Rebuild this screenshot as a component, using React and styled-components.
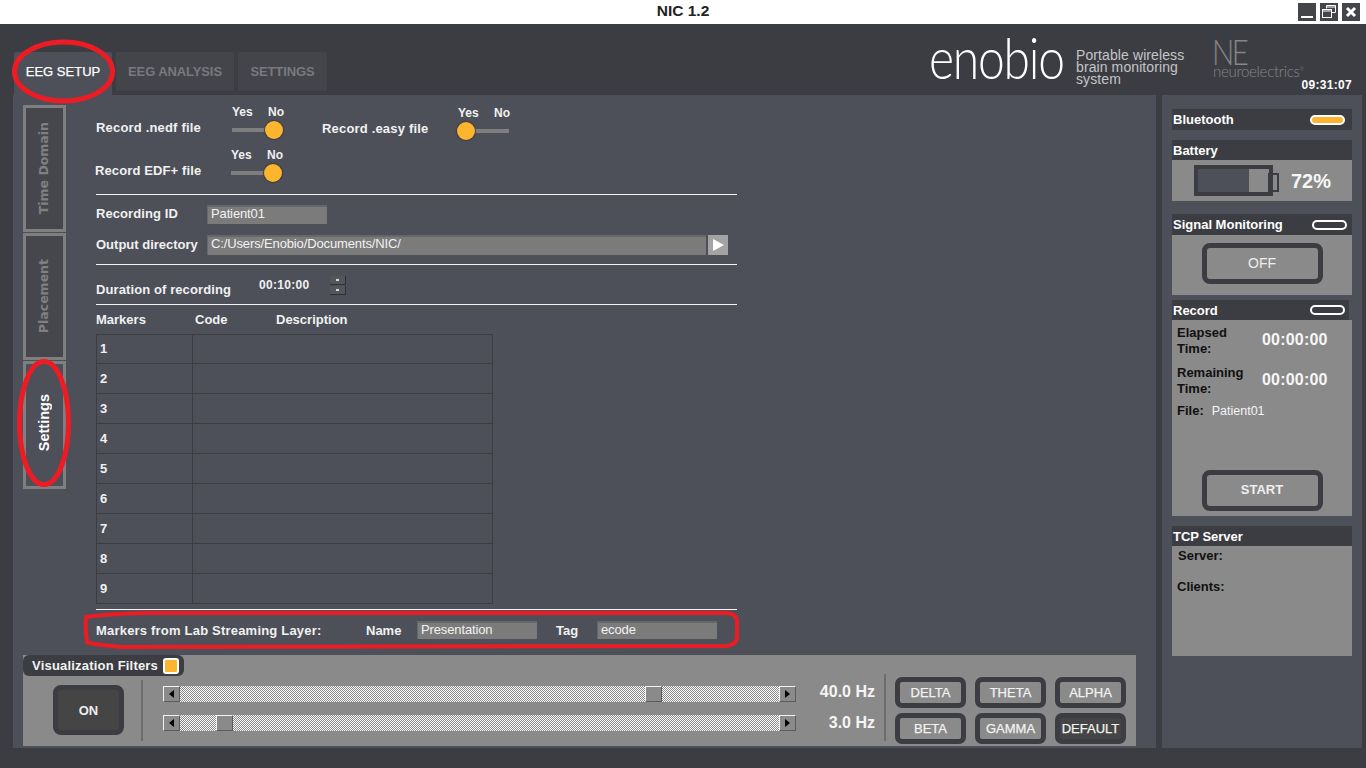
import React from 'react';
import styled, { createGlobalStyle } from 'styled-components';

const DARK = '#3c3d42';
const PANEL = '#4d5058';
const GREY = '#8a8a8a';
const ORANGE = '#fdb52f';

const Global = createGlobalStyle`
  html, body { margin: 0; padding: 0; background: ${DARK}; }
  body { font-family: "Liberation Sans", Arial, sans-serif; overflow: hidden; }
  * { box-sizing: border-box; }
`;

const Page = styled.div`
  position: relative;
  width: 1366px;
  height: 768px;
  display: flex;
  flex-flow: column;
  background: ${DARK};
  overflow: hidden;
`;

const TitleBar = styled.div`
  position: relative;
  height: 24px;
  flex: none;
  background: #fff;
  display: flex;
  align-items: center;
  justify-content: flex-end;
  padding-right: 6px;
  gap: 4px;
`;

const Title = styled.div`
  position: absolute;
  left: 0;
  right: 0;
  top: 3px;
  text-align: center;
  font-size: 15.5px;
  line-height: 16px;
  font-weight: 700;
  color: #222;
`;

const WinButton = styled.div`
  width: 18px;
  height: 18px;
  background: #44454a;
  display: flex;
  align-items: center;
  justify-content: center;
`;

const Header = styled.div`
  height: 71px;
  flex: none;
  display: flex;
  padding: 0 14px;
`;

const Tabs = styled.div`
  display: flex;
  gap: 4px;
  align-items: flex-start;
  padding-top: 28px;
`;

const Tab = styled.div`
  width: ${p => p.$width}px;
  height: ${p => (p.$active ? 43 : 39)}px;
  padding-top: 12px;
  text-align: center;
  font-size: 13px;
  line-height: 15px;
  font-weight: ${p => (p.$active ? 400 : 700)};
  letter-spacing: ${p => (p.$active ? 0 : -0.1)}px;
  -webkit-text-stroke: ${p => (p.$active ? 0.25 : 0)}px;
  background: ${p => (p.$active ? PANEL : '#44454b')};
  color: ${p => (p.$active ? '#fff' : '#77797e')};
  border-radius: 2px 2px 0 0;
`;

const Brand = styled.div`
  margin-left: auto;
  display: flex;
`;

const Enobio = styled.div`
  width: 147px;
  margin-top: 8px;
  margin-left: -2px;
  font-family: Lato, sans-serif;
  font-weight: 300;
  font-size: 48px;
  line-height: 56px;
  letter-spacing: -1.2px;
  color: #fff;
  transform: scaleY(1.2);
  transform-origin: 0 42px;
`;

const Tagline = styled.div`
  width: 137px;
  padding-top: 25px;
  font-size: 14px;
  line-height: 12px;
  letter-spacing: 0.1px;
  color: #c4c5c8;
`;

const Neuro = styled.div`
  width: 139px;
  display: flex;
  flex-flow: column;
  color: #85868a;
  font-family: Lato, sans-serif;
  font-weight: 300;
`;

const NeMark = styled.div`
  font-size: 36px;
  line-height: 26px;
  height: 27px;
  margin-top: 14px;
  margin-left: -1px;
  letter-spacing: -3px;
  transform: scaleX(0.82);
  transform-origin: 0 0;
`;

const NeName = styled.div`
  font-size: 15px;
  line-height: 13px;
  letter-spacing: -0.3px;
  sup {
    font-size: 5px;
    line-height: 0;
    vertical-align: 6px;
  }
`;

const Clock = styled.div`
  font-family: "Liberation Sans", sans-serif;
  font-weight: 700;
  text-align: right;
  font-size: 12px;
  line-height: 14px;
  letter-spacing: 0.3px;
  color: #fff;
`;

const Body = styled.div`
  height: 653px;
  flex: none;
  display: flex;
  padding-left: 13px;
`;

const Main = styled.div`
  width: 1143px;
  padding: 10px 0 2px 10px;
  display: flex;
  flex-flow: column;
  background: ${PANEL};
`;

const Top = styled.div`
  display: flex;
`;

const SideTabs = styled.div`
  width: 43px;
  display: flex;
  flex-flow: column;
  gap: 1px;
`;

const SideTab = styled.div`
  height: ${p => p.$height}px;
  display: flex;
  align-items: center;
  justify-content: center;
  padding-right: 2px;
  padding-bottom: ${p => (p.$active ? 5 : 0)}px;
  border: 3px solid #7f7f7f;
  background: ${p => (p.$active ? PANEL : '#46474c')};
  color: ${p => (p.$active ? '#fff' : '#808080')};
  span {
    writing-mode: vertical-rl;
    transform: rotate(180deg);
    font-family: ${p => (p.$active ? '"Liberation Sans"' : '"DejaVu Sans"')}, sans-serif;
    font-size: ${p => (p.$active ? 14.5 : 12.5)}px;
    font-weight: 700;
  }
`;

const Form = styled.div`
  width: 641px;
  margin-left: 30px;
  display: flex;
  flex-flow: column;
  color: #f1f1f1;
  font-size: 13px;
  line-height: 15px;
  font-weight: 700;
`;

const ToggleRow = styled.div`
  display: flex;
  align-items: flex-start;
  height: 34px;
  margin-top: ${p => p.$top || 0}px;
  margin-left: ${p => p.$left || 0}px;
`;

const ToggleGroup = styled.div`
  display: flex;
  align-items: flex-end;
  height: 34px;
  margin-left: ${p => p.$left || 0}px;
  margin-top: ${p => p.$top || 0}px;
`;

const FieldLabel = styled.div`
  width: ${p => p.$width}px;
  flex: none;
  margin-bottom: ${p => p.$bottom || 0}px;
  letter-spacing: ${p => p.$spacing || 0}px;
`;

const Toggle = styled.div`
  width: 52px;
`;

const ToggleText = styled.div`
  display: flex;
  justify-content: space-between;
  height: 16px;
  font-size: 12px;
  line-height: 14px;
`;

const Slider = styled.div`
  position: relative;
  height: 18px;
  &::before {
    content: '';
    position: absolute;
    left: 0;
    width: 51px;
    top: 7px;
    height: 4px;
    background: #7f7f7f;
  }
`;

const Knob = styled.div`
  position: absolute;
  top: 0;
  left: ${p => (p.$on ? -1 : 33)}px;
  width: 18px;
  height: 18px;
  border-radius: 50%;
  background: ${ORANGE};
  box-shadow: 0 0 1px 1px #3c3d42;
`;

const Rule = styled.div`
  height: 1px;
  flex: none;
  background: #f4f4f4;
  margin-top: ${p => p.$top}px;
`;

const Row = styled.div`
  display: flex;
  align-items: center;
  height: ${p => p.$height}px;
  margin-top: ${p => p.$top}px;
`;

const Input = styled.div`
  width: ${p => p.$width}px;
  height: 100%;
  padding-left: 3px;
  background: #7b7b7b;
  border-top: 2px solid #66676a;
  border-left: 1px solid #66676a;
  font-size: 13px;
  line-height: 14px;
  letter-spacing: -0.13px;
  font-weight: 400;
  color: #f2f2f2;
  white-space: nowrap;
`;

const PlayButton = styled.div`
  width: 20px;
  height: 20px;
  margin-left: 2px;
  background: #a3a3a3;
  display: flex;
  align-items: center;
  justify-content: center;
`;

const DurationRow = styled.div`
  display: flex;
  height: 19px;
  margin-top: 11px;
`;

const DurationLabel = styled.div`
  width: 163px;
  margin-top: 6px;
  letter-spacing: 0.1px;
`;

const DurationValue = styled.div`
  width: 71px;
  margin-top: 2px;
  font-size: 12px;
  letter-spacing: 0.3px;
`;

const Spinner = styled.div`
  width: 16px;
  height: 19px;
  display: flex;
  flex-flow: column;
  gap: 1px;
`;

const SpinButton = styled.div`
  flex: 1;
  background: #55565c;
  border-right: 1px solid #2f3034;
  border-bottom: 1px solid #2f3034;
  display: flex;
  align-items: center;
  justify-content: center;
  &::after {
    content: '';
    width: 3px;
    height: 2px;
    background: #d8d8d8;
  }
`;

const MarkerHead = styled.div`
  display: flex;
  height: 15px;
  margin-top: 7px;
`;

const MarkerCol = styled.div`
  width: ${p => p.$width}px;
`;

const Table = styled.table`
  width: 397px;
  height: 270px;
  margin-top: 7px;
  flex: none;
  border-collapse: collapse;
  td {
    height: 30px;
    padding: 0 0 0 3px;
    border: 1px solid #3c3d42;
  }
  tr:first-child td {
    height: 29px;
    padding-bottom: 1px;
  }
  td:first-child {
    width: 96px;
  }
`;

const LslLabel = styled.div`
  width: ${p => p.$width}px;
  flex: none;
  margin-left: ${p => p.$left || 0}px;
  letter-spacing: ${p => p.$spacing || 0}px;
`;

const Filters = styled.div`
  margin-top: auto;
  width: 1113px;
  height: 91px;
  flex: none;
  background: ${GREY};
`;

const FilterTab = styled.div`
  width: 161px;
  height: 21px;
  background: ${DARK};
  border-radius: 6px;
  display: flex;
  align-items: center;
  justify-content: space-between;
  padding: 0 5px 0 9px;
  color: #f2f2f2;
  font-size: 13px;
  font-weight: 700;
  letter-spacing: 0.2px;
`;

const Check = styled.div`
  width: 16px;
  height: 16px;
  border: 2px solid #fff;
  border-radius: 3px;
  background: ${ORANGE};
`;

const FilterRow = styled.div`
  display: flex;
  height: 70px;
  padding-left: 30px;
`;

const OnButton = styled.div`
  width: 71px;
  height: 50px;
  margin-top: 9px;
  border: 5px solid ${DARK};
  border-radius: 8px;
  background: #454545;
  color: #eee;
  font-size: 13px;
  font-weight: 700;
  display: flex;
  align-items: center;
  justify-content: center;
`;

const Divider = styled.div`
  width: 2px;
  flex: none;
  height: ${p => p.$height}px;
  margin-top: ${p => p.$top}px;
  margin-left: ${p => p.$left}px;
  background: #6d6d6d;
`;

const Scrolls = styled.div`
  width: 633px;
  margin: 10px 0 0 20px;
  display: flex;
  flex-flow: column;
  gap: 13px;
`;

const Scroll = styled.div`
  display: flex;
  height: 16px;
`;

const ScrollTrack = styled.div`
  position: relative;
  flex: 1;
  background: repeating-conic-gradient(#fff 0 25%, #8a8a8a 0 50%) 0 0 / 2px 2px;
`;

const ScrollButton = styled.div`
  width: 17px;
  height: 16px;
  flex: none;
  background: ${GREY};
  border: 1px solid;
  border-color: #f2f2f2 #5b5b5b #5b5b5b #f2f2f2;
  display: flex;
  align-items: center;
  justify-content: center;
`;

const Thumb = styled(ScrollButton)`
  position: absolute;
  top: 0;
  left: ${p => p.$left}px;
`;

const Arrow = styled.div`
  width: 0;
  height: 0;
  border-top: 4px solid transparent;
  border-bottom: 4px solid transparent;
  border-right: ${p => (p.$right ? '0' : '5px solid #000')};
  border-left: ${p => (p.$right ? '5px solid #000' : '0')};
`;

const HzColumn = styled.div`
  width: 79px;
  margin-top: 8px;
  display: flex;
  flex-flow: column;
  gap: 15px;
  text-align: right;
  color: #f5f5f5;
  font-size: 16px;
  line-height: 16px;
  font-weight: 700;
`;

const FilterButtons = styled.div`
  margin: 1px 0 0 9px;
  display: grid;
  grid-template-columns: repeat(3, 71px);
  grid-auto-rows: 31px;
  column-gap: 9px;
  row-gap: 5px;
`;

const FilterButton = styled.div`
  border: 5px solid ${DARK};
  border-radius: 7px;
  padding-bottom: 1px;
  background: ${p => (p.$active ? '#454545' : GREY)};
  color: #f2f2f2;
  font-size: 13px;
  -webkit-text-stroke: 0.25px;
  display: flex;
  align-items: center;
  justify-content: center;
  white-space: nowrap;
`;

const Side = styled.div`
  width: 200px;
  margin-left: 6px;
  padding: 14px 10px 0;
  background: ${PANEL};
  display: flex;
  flex-flow: column;
`;

const CardHead = styled.div`
  height: ${p => p.$height || 20}px;
  width: ${p => p.$width || 180}px;
  margin-top: ${p => p.$top || 0}px;
  background: ${DARK};
  display: flex;
  align-items: center;
  justify-content: space-between;
  padding: 0 ${p => p.$right || 7}px 0 1px;
  color: #fff;
  font-size: 13px;
  font-weight: 700;
`;

const Pill = styled.div`
  width: 35px;
  height: 10px;
  border: 2px solid #fff;
  border-radius: 5px;
  background: ${p => (p.$on ? ORANGE : DARK)};
`;

const CardBody = styled.div`
  height: ${p => p.$height}px;
  background: ${GREY};
  color: #111;
  font-size: 13px;
  line-height: 16px;
  font-weight: 700;
`;

const BatteryBody = styled(CardBody)`
  display: flex;
  align-items: center;
  padding-left: 22px;
`;

const Battery = styled.div`
  position: relative;
  width: 79px;
  height: 31px;
  border: 4px solid ${DARK};
  display: flex;
  &::after {
    content: '';
    position: absolute;
    right: -10px;
    top: 4px;
    width: 6px;
    height: 15px;
    border: 2px solid ${DARK};
    border-left-width: 3px;
  }
`;

const BatteryLevel = styled.div`
  height: 100%;
  width: ${p => p.$level}%;
  background: ${PANEL};
`;

const BatteryText = styled.div`
  margin-left: 18px;
  color: #f7f7f7;
  font-size: 20px;
  line-height: 24px;
`;

const BigButton = styled.div`
  width: 121px;
  height: 41px;
  margin: 0 auto;
  padding-bottom: 2px;
  border: 5px solid ${DARK};
  border-radius: 8px;
  color: #eee;
  font-size: ${p => (p.$bold ? 13 : 14)}px;
  font-weight: ${p => (p.$bold ? 700 : 400)};
  display: flex;
  align-items: center;
  justify-content: center;
`;

const ButtonBody = styled(CardBody)`
  padding-top: ${p => p.$pad}px;
`;

const TimeRow = styled.div`
  display: flex;
  align-items: center;
  padding-left: 5px;
  height: 32px;
  margin-top: ${p => p.$top}px;
`;

const TimeLabel = styled.div`
  width: 85px;
`;

const TimeValue = styled.div`
  margin-bottom: 2px;
  font-size: 16px;
  color: #f7f7f7;
  letter-spacing: 0.2px;
`;

const FileRow = styled.div`
  display: flex;
  align-items: center;
  padding-left: 5px;
  margin-top: 6px;
  height: 16px;
`;

const FileName = styled.span`
  margin-left: 8px;
  color: #f4f4f4;
  font-size: 12.5px;
  font-weight: 400;
`;

const StartWrap = styled.div`
  margin-top: 51px;
`;

const TcpLine = styled.div`
  padding-left: ${p => p.$left}px;
  margin-top: ${p => p.$top}px;
`;

const Annotations = styled.svg`
  position: absolute;
  left: 0;
  top: 0;
  pointer-events: none;
`;

const ToggleSwitch = ({ on }) => (
  <Toggle>
    <ToggleText><span>Yes</span><span>No</span></ToggleText>
    <Slider><Knob $on={on} /></Slider>
  </Toggle>
);

const ScrollBar = ({ thumb }) => (
  <Scroll>
    <ScrollButton><Arrow /></ScrollButton>
    <ScrollTrack><Thumb $left={thumb} /></ScrollTrack>
    <ScrollButton><Arrow $right /></ScrollButton>
  </Scroll>
);

const markers = [1, 2, 3, 4, 5, 6, 7, 8, 9];

export default function App() {
  return (
    <Page>
      <Global />
      <TitleBar>
        <Title>NIC 1.2</Title>
        <WinButton>
          <svg width="14" height="14" viewBox="0 0 14 14"><rect x="1" y="11" width="12" height="2" fill="#fff" /></svg>
        </WinButton>
        <WinButton>
          <svg width="16" height="16" viewBox="0 0 16 16" fill="none" stroke="#fff" strokeWidth="1">
            <path d="M5.5 4.5V1.5H14.5V8.5H10.5" />
            <rect x="1.5" y="5.5" width="9" height="8" />
            <path d="M5.5 3H14.5M1.5 7H10.5" />
          </svg>
        </WinButton>
        <WinButton>
          <svg width="14" height="14" viewBox="0 0 14 14" stroke="#fff" strokeWidth="3"><path d="M3 3L11 11M11 3L3 11" /></svg>
        </WinButton>
      </TitleBar>

      <Header>
        <Tabs>
          <Tab $active $width={98}>EEG SETUP</Tab>
          <Tab $width={118}>EEG ANALYSIS</Tab>
          <Tab $width={89}>SETTINGS</Tab>
        </Tabs>
        <Brand>
          <Enobio>enobio</Enobio>
          <Tagline>Portable wireless<br />brain monitoring<br />system</Tagline>
          <Neuro>
            <NeMark>NE</NeMark>
            <NeName>neuroelectrics<sup>®</sup></NeName>
            <Clock>09:31:07</Clock>
          </Neuro>
        </Brand>
      </Header>

      <Body>
        <Main>
          <Top>
            <SideTabs>
              <SideTab $height={127}><span>Time Domain</span></SideTab>
              <SideTab $height={127}><span>Placement</span></SideTab>
              <SideTab $active $height={128}><span>Settings</span></SideTab>
            </SideTabs>
            <Form>
              <ToggleRow>
                <ToggleGroup>
                  <FieldLabel $width={136} $bottom={4} $spacing={0.18}>Record .nedf file</FieldLabel>
                  <ToggleSwitch />
                </ToggleGroup>
                <ToggleGroup $left={38} $top={1}>
                  <FieldLabel $width={136} $bottom={4} $spacing={0.18}>Record .easy file</FieldLabel>
                  <ToggleSwitch on />
                </ToggleGroup>
              </ToggleRow>
              <ToggleRow $top={9} $left={-1}>
                <ToggleGroup>
                  <FieldLabel $width={136} $bottom={4} $spacing={0.12}>Record EDF+ file</FieldLabel>
                  <ToggleSwitch />
                </ToggleGroup>
              </ToggleRow>
              <Rule $top={12} />
              <Row $height={19} $top={10}>
                <FieldLabel $width={111} $bottom={2} $spacing={0.08}>Recording ID</FieldLabel>
                <Input $width={120}>Patient01</Input>
              </Row>
              <Row $height={20} $top={11}>
                <FieldLabel $width={111} $bottom={2}>Output directory</FieldLabel>
                <Input $width={499}>C:/Users/Enobio/Documents/NIC/</Input>
                <PlayButton>
                  <svg width="12" height="12" viewBox="0 0 12 12"><path d="M1 0L12 6L1 12Z" fill="#fff" /></svg>
                </PlayButton>
              </Row>
              <Rule $top={9} />
              <DurationRow>
                <DurationLabel>Duration of recording</DurationLabel>
                <DurationValue>00:10:00</DurationValue>
                <Spinner><SpinButton /><SpinButton /></Spinner>
              </DurationRow>
              <Rule $top={9} />
              <MarkerHead>
                <MarkerCol $width={99}>Markers</MarkerCol>
                <MarkerCol $width={81}>Code</MarkerCol>
                <MarkerCol $width={100}>Description</MarkerCol>
              </MarkerHead>
              <Table>
                <tbody>
                  {markers.map(n => (
                    <tr key={n}><td>{n}</td><td /></tr>
                  ))}
                </tbody>
              </Table>
              <Rule $top={5} />
              <Row $height={18} $top={11}>
                <LslLabel $width={270} $spacing={0.2}>Markers from Lab Streaming Layer:</LslLabel>
                <LslLabel $width={51}>Name</LslLabel>
                <Input $width={120}>Presentation</Input>
                <LslLabel $width={41} $left={19}>Tag</LslLabel>
                <Input $width={120}>ecode</Input>
              </Row>
            </Form>
          </Top>

          <Filters>
            <FilterTab>Visualization Filters<Check /></FilterTab>
            <FilterRow>
              <OnButton>ON</OnButton>
              <Divider $left={17} $top={4} $height={61} />
              <Scrolls>
                <ScrollBar thumb={465} />
                <ScrollBar thumb={36} />
              </Scrolls>
              <HzColumn>
                <div>40.0 Hz</div>
                <div>3.0 Hz</div>
              </HzColumn>
              <Divider $left={9} $top={-2} $height={67} />
              <FilterButtons>
                <FilterButton>DELTA</FilterButton>
                <FilterButton>THETA</FilterButton>
                <FilterButton>ALPHA</FilterButton>
                <FilterButton>BETA</FilterButton>
                <FilterButton>GAMMA</FilterButton>
                <FilterButton $active>DEFAULT</FilterButton>
              </FilterButtons>
            </FilterRow>
          </Filters>
        </Main>

        <Side>
          <CardHead $height={21}>Bluetooth<Pill $on /></CardHead>

          <CardHead $top={10}>Battery</CardHead>
          <BatteryBody $height={41}>
            <Battery>
              <BatteryLevel $level={72} />
            </Battery>
            <BatteryText>72%</BatteryText>
          </BatteryBody>

          <CardHead $top={13} $height={21} $right={5}>Signal Monitoring<Pill /></CardHead>
          <ButtonBody $height={60} $pad={8}>
            <BigButton>OFF</BigButton>
          </ButtonBody>

          <CardHead $top={5} $width={177} $right={4}>Record<Pill /></CardHead>
          <CardBody $height={196}>
            <TimeRow $top={5}>
              <TimeLabel>Elapsed<br />Time:</TimeLabel>
              <TimeValue>00:00:00</TimeValue>
            </TimeRow>
            <TimeRow $top={8}>
              <TimeLabel>Remaining<br />Time:</TimeLabel>
              <TimeValue>00:00:00</TimeValue>
            </TimeRow>
            <FileRow>File:<FileName>Patient01</FileName></FileRow>
            <StartWrap><BigButton $bold>START</BigButton></StartWrap>
          </CardBody>

          <CardHead $top={10}>TCP Server</CardHead>
          <CardBody $height={110}>
            <TcpLine $left={6} $top={2}>Server:</TcpLine>
            <TcpLine $left={5} $top={15}>Clients:</TcpLine>
          </CardBody>
        </Side>
      </Body>

      <Annotations width="1366" height="768" viewBox="0 0 1366 768" fill="none" stroke="#ed1c24" strokeWidth="5">
        <ellipse cx="63.5" cy="71.5" rx="49" ry="29.5" />
        <ellipse cx="44" cy="423" rx="24.5" ry="61.5" />
        <path d="M148 613 L728 613 Q737 614 737 622 L737 638 Q736 645 726 646 L120 647 Q90 644 87 642 Q85 628 86 617 Q105 614 148 613Z" strokeWidth="4" />
      </Annotations>
    </Page>
  );
}
